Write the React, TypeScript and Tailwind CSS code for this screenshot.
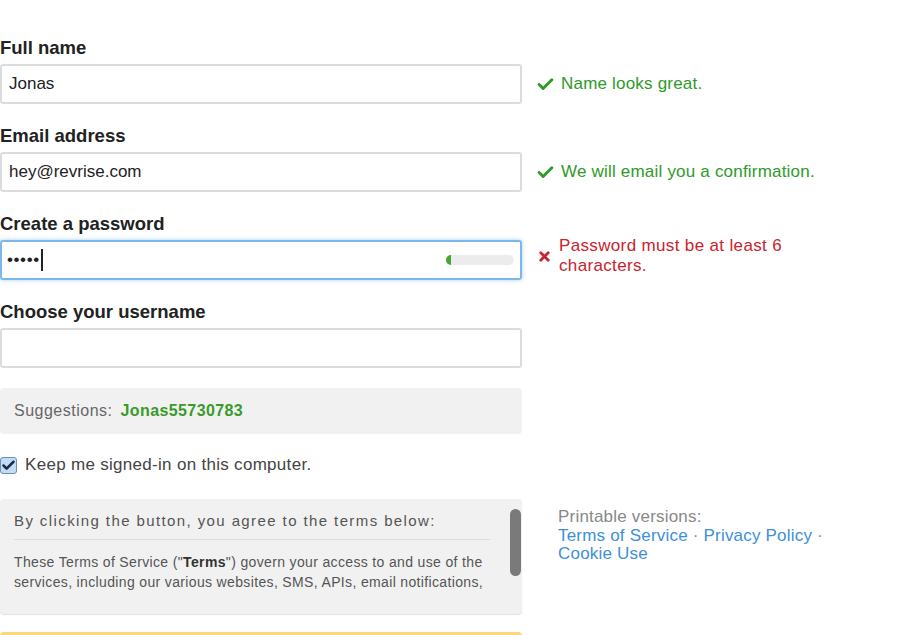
import { Check, X } from "lucide-react";

const font = { fontFamily: '"Liberation Sans", Arial, sans-serif' };

function Label({ children }: { children: string }) {
  return <div className="h-6 text-[18.5px] font-bold leading-6 text-[#222]">{children}</div>;
}

function Message({ children }: { children: React.ReactNode }) {
  return (
    <div className="flex items-center gap-[6px] text-[17px] leading-5 tracking-[0.2px] text-[#2e9a2a]">
      <Check className="h-[19px] w-[19px] shrink-0" strokeWidth={3.75} />
      <span>{children}</span>
    </div>
  );
}

export default function App() {
  return (
    <div style={font} className="h-[635px] w-[900px] overflow-hidden bg-white pt-9">
      <div className="grid grid-cols-[522px_1fr] gap-x-[14px]">
        {/* full name */}
        <div>
          <Label>Full name</Label>
          <div className="mt-1 flex h-10 items-center rounded-[3px] border-2 border-[#dcdcdc] px-[7px] text-[17px] text-[#222]">Jonas</div>
        </div>
        <div className="flex items-end pb-[10px]">
          <Message>Name looks great.</Message>
        </div>

        {/* email */}
        <div className="mt-5">
          <Label>Email address</Label>
          <div className="mt-1 flex h-10 items-center rounded-[3px] border-2 border-[#dcdcdc] px-[7px] text-[17px] text-[#222]">hey@revrise.com</div>
        </div>
        <div className="flex items-end pb-[10px]">
          <Message>We will email you a confirmation.</Message>
        </div>

        {/* password */}
        <div className="mt-5">
          <Label>Create a password</Label>
          <div className="mt-1 flex h-10 items-center rounded-[3px] border-2 border-[#7db7ec] px-[5px] text-[17px] text-[#222] shadow-[0_0_4px_rgba(82,160,230,0.5)]">
            <span className="text-[17px] tracking-[0.6px]">•••••</span>
            <span className="ml-[1px] h-[22px] w-[2px] bg-[#222]" />
            <div className="ml-auto mr-[1px] h-[10px] w-[68px] rounded-full bg-[#ececec]">
              <div className="h-[10px] w-[5px] rounded-l-full bg-[#43a82f]" />
            </div>
          </div>
        </div>
        <div className="flex items-end pb-[4px]">
          <div className="flex items-center gap-[7px] text-[17px] leading-5 tracking-[0.35px] text-[#c9232d]">
            <X className="ml-[1px] h-[15px] w-[15px] shrink-0" strokeWidth={4.5} />
            <span>
              Password must be at least 6
              <br />
              characters.
            </span>
          </div>
        </div>

        {/* username */}
        <div className="mt-5">
          <Label>Choose your username</Label>
          <div className="mt-1 h-10 rounded-[3px] border-2 border-[#dcdcdc]" />
        </div>
        <div />

        <div className="mt-5 flex h-[46px] items-center rounded-[4px] bg-[#f1f1f1] px-[14px] text-[16px] tracking-[0.5px]">
          <span className="text-[#666]">Suggestions:</span>
          <span className="ml-2 font-bold tracking-[0.4px] text-[#3a9a2a]">Jonas55730783</span>
        </div>
        <div />

        <div className="mt-[21px] flex h-5 items-center text-[17px] tracking-[0.3px] text-[#444]">
          <span className="mr-[8px] flex h-[17px] w-[17px] items-center justify-center rounded-[3px] border border-[#6d8fb8] bg-[#c3dcf5]">
            <Check className="h-[15px] w-[15px] text-[#1d2a44]" strokeWidth={4} />
          </span>
          Keep me signed-in on this computer.
        </div>
        <div />

        {/* terms */}
        <div className="relative mt-6 h-[115px] rounded-[4px] bg-[#f1f1f1] px-[14px] pt-[12px] shadow-[0_1px_1px_rgba(0,0,0,0.12)]">
          <div className="pr-[18px]">
            <div className="whitespace-nowrap border-b border-[#dcdcdc] pb-[8px] text-[15px] leading-5 tracking-[1.4px] text-[#555]">
              By clicking the button, you agree to the terms below:
            </div>
            <p className="mt-[12px] whitespace-nowrap text-[14px] leading-5 tracking-[0.35px] text-[#555]">
              These Terms of Service ("<b className="text-[#333]">Terms</b>") govern your access to and use of the
              <br />
              services, including our various websites, SMS, APIs, email notifications,
            </p>
          </div>
          <div className="absolute right-[1px] top-[10px] h-[67px] w-[11px] rounded-full bg-[#7a7a7a]" />
        </div>
        <div className="mt-6 pl-[22px] pt-[9px] text-[17px] leading-[18.5px] tracking-[0.2px]">
          <div className="text-[#888]">Printable versions:</div>
          <div className="text-[#3d8fd8]">
            Terms of Service <span className="text-[#888]">·</span> Privacy Policy <span className="text-[#888]">·</span>
            <br />
            Cookie Use
          </div>
        </div>

        <div className="mt-[18px] h-10 rounded-t-[4px] border-t-[3px] border-[#fcd57e] bg-white" />
        <div />
      </div>
    </div>
  );
}
